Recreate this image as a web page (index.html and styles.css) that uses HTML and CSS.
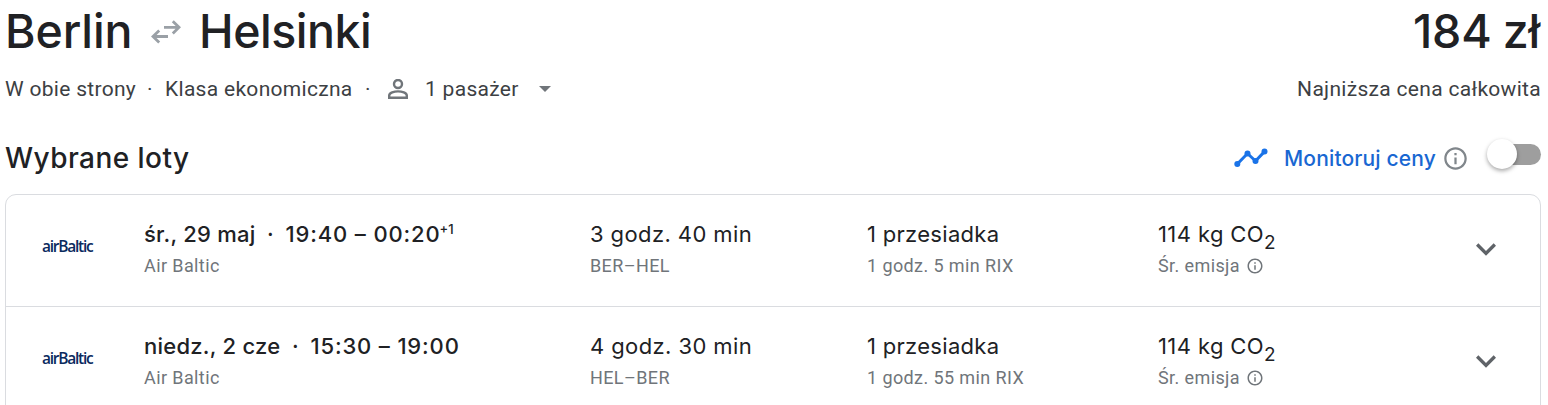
FILE: index.html
```
<!DOCTYPE html>
<html lang="pl">
<head>
    <meta charset="UTF-8">
    <meta name="viewport" content="width=device-width, initial-scale=1.0">
    <title>Berlin – Helsinki</title>
    <link rel="stylesheet" href="styles.css">
</head>
<body>
    <svg class="defs" width="0" height="0">
        <symbol id="info" viewBox="0 0 24 24">
            <path d="M11 7h2v2h-2zm0 4h2v6h-2zm1-9C6.48 2 2 6.48 2 12s4.48 10 10 10 10-4.48 10-10S17.52 2 12 2zm0 18c-4.41 0-8-3.59-8-8s3.59-8 8-8 8 3.59 8 8-3.59 8-8 8z"/>
        </symbol>
        <symbol id="chevron" viewBox="0 0 24 24">
            <path d="M7.41 8.59 12 13.17l4.59-4.58L18 10l-6 6-6-6z"/>
        </symbol>
    </svg>

    <header class="trip">
        <h1>
            <span class="from">Berlin</span>
            <svg class="arrows" viewBox="0 0 30 24">
                <path d="M13 7.3h15M21.8 1.2l6.2 6.1-6.2 6.1M17 16.5H2M8.2 10.4 2 16.5l6.2 6.1"/>
            </svg>
            <span class="to">Helsinki</span>
        </h1>
        <div class="price">184 zł</div>
    </header>

    <div class="details">
        <span class="type">W obie strony</span>
        <span class="dot">·</span>
        <span class="cabin">Klasa ekonomiczna</span>
        <span class="dot">·</span>
        <svg class="person" viewBox="0 0 20 20">
            <circle cx="10" cy="5" r="4"/>
            <path d="M1.2 18.8v-2.3c0-2.6 5-4.1 8.8-4.1s8.8 1.5 8.8 4.1v2.3z"/>
        </svg>
        <span class="passengers">1 pasażer</span>
        <span class="caret"></span>
        <span class="lowest">Najniższa cena całkowita</span>
    </div>

    <div class="heading">
        <h2>Wybrane loty</h2>
        <div class="track">
            <svg class="trend" viewBox="0 0 34 20">
                <path d="M3.3 16 13.5 5.5 21.5 13 30.5 3.6"/>
                <circle cx="3.3" cy="16" r="3"/>
                <circle cx="13.5" cy="5.5" r="3"/>
                <circle cx="21.5" cy="13" r="3"/>
                <circle cx="30.5" cy="3.6" r="3"/>
            </svg>
            <span class="track-label">Monitoruj ceny</span>
            <svg class="track-info"><use href="#info"/></svg>
            <span class="toggle"><span class="knob"></span></span>
        </div>
    </div>

    <div class="flights">
        <div class="flight">
            <div class="logo"><span>airBaltic</span></div>
            <div class="when">
                <div class="main"><span class="date">śr., 29 maj</span><span class="sep">·</span><span class="time">19:40 – 00:20</span><span class="plus">+1</span></div>
                <div class="sub">Air Baltic</div>
            </div>
            <div class="duration">
                <div class="main">3 godz. 40 min</div>
                <div class="sub">BER–HEL</div>
            </div>
            <div class="stops">
                <div class="main">1 przesiadka</div>
                <div class="sub">1 godz. 5 min RIX</div>
            </div>
            <div class="emission">
                <div class="main">114 kg CO<span class="two">2</span></div>
                <div class="sub">Śr. emisja <svg><use href="#info"/></svg></div>
            </div>
            <svg class="expand"><use href="#chevron"/></svg>
        </div>
        <div class="flight">
            <div class="logo"><span>airBaltic</span></div>
            <div class="when">
                <div class="main"><span class="date">niedz., 2 cze</span><span class="sep">·</span><span class="time">15:30 – 19:00</span></div>
                <div class="sub">Air Baltic</div>
            </div>
            <div class="duration">
                <div class="main">4 godz. 30 min</div>
                <div class="sub">HEL–BER</div>
            </div>
            <div class="stops">
                <div class="main">1 przesiadka</div>
                <div class="sub">1 godz. 55 min RIX</div>
            </div>
            <div class="emission">
                <div class="main">114 kg CO<span class="two">2</span></div>
                <div class="sub">Śr. emisja <svg><use href="#info"/></svg></div>
            </div>
            <svg class="expand"><use href="#chevron"/></svg>
        </div>
    </div>
</body>
</html>
```
FILE: styles.css
```
* {
    box-sizing: border-box;
}
body {
    margin: 0;
    padding: 0 7px 0 5px;
    height: 405px;
    overflow: hidden;
    background: #fff;
    color: #202124;
    font-family: Inter, sans-serif;
    white-space: nowrap;
}
svg {
    display: block;
    flex: none;
}
.defs {
    position: absolute;
}
h1, h2 {
    margin: 0;
    font-weight: 500;
}
.trip {
    display: flex;
    justify-content: space-between;
    height: 64px;
    font-size: 46.5px;
    font-weight: 500;
    line-height: 63px;
}
h1 {
    display: flex;
    font-size: 46.5px;
}
.from {
    width: 145px;
    letter-spacing: -0.1px;
}
.to {
    margin-left: -1px;
    letter-spacing: -0.5px;
}
.arrows {
    width: 30px;
    height: 24px;
    margin: 20px 19px 0 1px;
    fill: none;
    stroke: #9aa0a6;
    stroke-width: 2.8;
}
.price {
    margin-right: 1px;
    font-weight: 550;
    letter-spacing: -0.2px;
    word-spacing: -1px;
}
.details {
    display: flex;
    align-items: center;
    height: 50px;
    color: #3c4043;
    font-family: Roboto, sans-serif;
    font-size: 21px;
    letter-spacing: 0.3px;
}
.type {
    width: 142px;
}
.dot {
    width: 18px;
}
.cabin {
    width: 200px;
}
.person {
    width: 20px;
    height: 20px;
    margin: 0 17px 0 5px;
    fill: none;
    stroke: #70757a;
    stroke-width: 2.4;
}
.caret {
    margin-left: 20px;
    border: 6.5px solid transparent;
    border-top-color: #70757a;
    border-bottom: 0;
}
.lowest {
    margin-left: auto;
}
.heading {
    display: flex;
    justify-content: space-between;
    height: 80px;
}
h2 {
    padding-top: 24px;
    font-size: 28px;
    line-height: 40px;
    letter-spacing: 0.45px;
}
.track {
    display: flex;
    align-items: center;
    height: 88px;
}
.trend {
    width: 34px;
    height: 20px;
    margin-right: 16px;
    fill: #1a73e8;
}
.trend path {
    fill: none;
    stroke: #1a73e8;
    stroke-width: 3;
}
.track-label {
    color: #1967d2;
    font-size: 21px;
    font-weight: 500;
    letter-spacing: 0.15px;
}
.track-info {
    width: 27px;
    height: 27px;
    margin: 1px 18px 0 6px;
    fill: #80868b;
}
.toggle {
    position: relative;
    width: 54px;
    height: 21px;
    margin-top: -7px;
}
.toggle::before {
    content: "";
    position: absolute;
    inset: 0 0 0 8px;
    border-radius: 11px;
    background: #9e9e9e;
}
.knob {
    position: absolute;
    top: -5px;
    left: 0;
    width: 30px;
    height: 30px;
    border-radius: 50%;
    background: #fff;
    box-shadow: 0 2px 4px rgba(0, 0, 0, 0.35);
}
.flights {
    border: 1px solid #dadce0;
    border-radius: 11px;
}
.flight {
    display: grid;
    grid-template-columns: 138px 446px 277px 291px 1fr;
    position: relative;
    height: 112px;
    padding-top: 24px;
    border-bottom: 1px solid #dadce0;
}
.logo {
    padding: 17px 0 0 36px;
    color: #0a2a5e;
    font-family: "Open Sans", sans-serif;
    font-size: 15.5px;
    font-weight: 650;
    line-height: 20px;
    letter-spacing: -1.25px;
}
.main {
    height: 32px;
    font-size: 22px;
    line-height: 31px;
    letter-spacing: 0.4px;
}
.stops .main {
    letter-spacing: 0.3px;
}
.when .main {
    font-weight: 500;
}
.date {
    letter-spacing: 0.25px;
}
.sep {
    display: inline-block;
    width: 30px;
    text-align: center;
}
.time {
    letter-spacing: 0.85px;
}
.plus {
    position: relative;
    top: -8px;
    margin-left: -1px;
    font-size: 13px;
    letter-spacing: 0;
}
.two {
    position: relative;
    top: 7px;
    font-size: 19px;
}
.sub {
    display: flex;
    align-items: center;
    height: 29px;
    color: #70757a;
    font-family: Roboto, sans-serif;
    font-size: 18px;
    letter-spacing: 0.4px;
}
.sub svg {
    width: 18px;
    height: 18px;
    margin-left: 6px;
    fill: #70757a;
}
.expand {
    position: absolute;
    top: 34px;
    right: 34px;
    width: 40px;
    height: 40px;
    fill: #5f6368;
}
```
